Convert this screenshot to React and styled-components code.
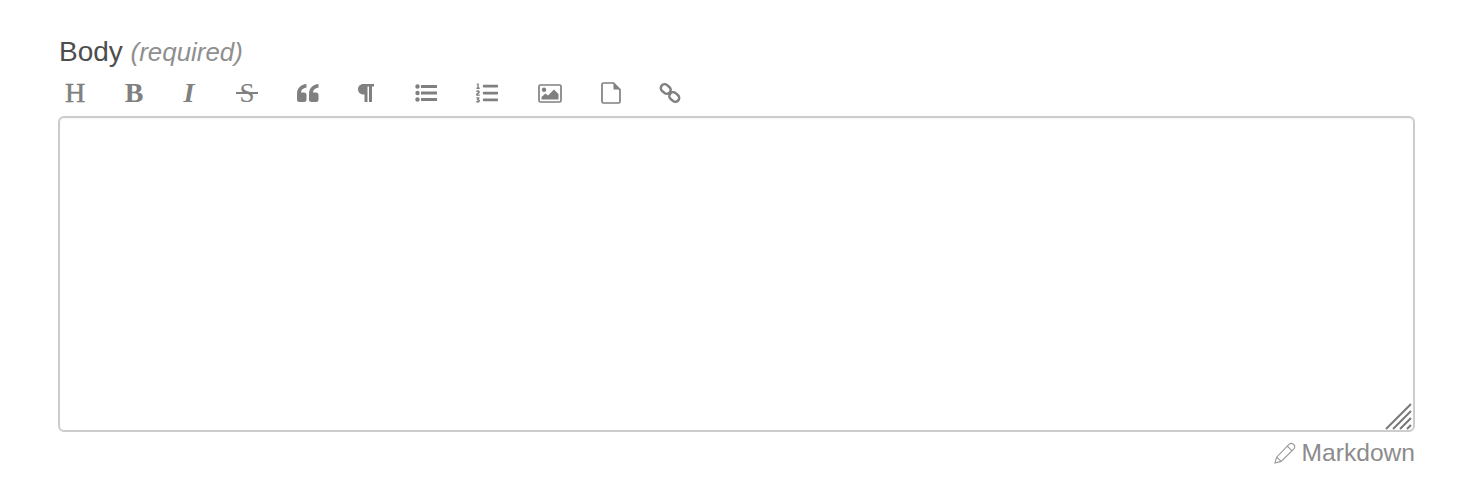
import React from "react";
import styled, { createGlobalStyle } from "styled-components";
import { FaListOl } from "react-icons/fa";

const GlobalStyle = createGlobalStyle`
  html, body {
    margin: 0;
    padding: 0;
    background: #fff;
    font-family: "Liberation Sans", Arial, sans-serif;
  }
`;

const Page = styled.div`
  padding: 36px 63px 0 58px;
`;

const Label = styled.label`
  display: block;
  height: 32px;
  line-height: 32px;
  font-size: 28px;
  padding-left: 1px;
  color: #4d4d4d;
`;

const Hint = styled.em`
  font-size: 25.9px;
  color: #8f8f8f;
`;

const Toolbar = styled.div`
  display: flex;
  align-items: center;
  height: 40px;
  margin-top: 5px;
  color: #808080;
`;

const Tool = styled.span`
  flex: none;
  position: relative;
  width: 34px;
  height: 40px;
  margin-left: ${(p) => p.$gap || 0}px;
  display: flex;
  justify-content: center;
  align-items: center;
  svg {
    display: block;
    fill: currentColor;
  }
`;

const Letter = styled(Tool)`
  font-family: "Liberation Serif", "Times New Roman", serif;
  font-size: 28px;
  line-height: 40px;
  font-weight: ${(p) => (p.$light ? "normal" : "bold")};
  font-style: ${(p) => (p.$italic ? "italic" : "normal")};
  -webkit-text-stroke: ${(p) => (p.$light ? "0.5px #808080" : "0")};
`;

const Strike = styled(Letter)`
  font-size: 27px;
  font-weight: normal;
  -webkit-text-stroke: 0;
  &::after {
    content: "";
    position: absolute;
    left: 6px;
    right: 6px;
    top: 19px;
    height: 2px;
    background: #808080;
  }
`;

const EditorWrap = styled.div`
  position: relative;
  margin-top: 3px;
  height: 316px;
`;

const Editor = styled.textarea`
  display: block;
  box-sizing: border-box;
  width: 100%;
  height: 100%;
  border: 2px solid #cccccc;
  border-radius: 6px;
  background: #fff;
  resize: none;
  outline: none;
  box-shadow: inset 0 1px 2px rgba(0, 0, 0, 0.04);
`;

const Grip = styled.svg`
  position: absolute;
  right: 2px;
  bottom: 2px;
  width: 28px;
  height: 28px;
`;

const Footer = styled.div`
  display: flex;
  justify-content: flex-end;
  align-items: center;
  gap: 6px;
  margin-top: 7px;
  height: 28px;
  font-size: 24.6px;
  color: #8c8c8c;
`;

const QuoteIcon = () => (
  <svg width="22" height="18" viewBox="0 0 22 18">
    <path d="M9.5 0C4 .5 0 4 0 10v5.5Q0 18 2.5 18H7q2.5 0 2.5-2.5V11Q9.5 8.5 7 8.5H4C4 6 6 4 9.5 3.5Z" />
    <path d="M21.5 0C16 .5 12 4 12 10v5.5q0 2.5 2.5 2.5H19q2.5 0 2.5-2.5V11q0-2.5-2.5-2.5h-3c0-2.5 2-4.5 5.5-5Z" />
  </svg>
);

const ParagraphIcon = () => (
  <svg width="16" height="18" viewBox="0 0 16 18">
    <path d="M5.5 0H16v2.5h-2V18h-3V2.5H9.5V18h-3v-7.5h-1C2 10.5 0 8 0 5.25S2 0 5.5 0Z" />
  </svg>
);

const ListIcon = () => (
  <svg width="22" height="18" viewBox="0 0 22 18">
    <circle cx="2.5" cy="2.5" r="2.2" />
    <circle cx="2.5" cy="9" r="2.2" />
    <circle cx="2.5" cy="15.5" r="2.2" />
    <rect x="6" y="1" width="16" height="3" />
    <rect x="6" y="7.5" width="16" height="3" />
    <rect x="6" y="14" width="16" height="3" />
  </svg>
);

const OrderedIcon = () => <FaListOl size={22} />;

const ImageIcon = () => (
  <svg width="24" height="19" viewBox="0 0 24 19">
    <rect x="1" y="1" width="22" height="17" rx="1.5" fill="none" stroke="currentColor" strokeWidth="1.7" />
    <circle cx="6" cy="5.8" r="2.2" />
    <path d="M3.5 15.5h17V10L16 5.5l-6 6-2.5-2-4 3.5Z" />
  </svg>
);

const FileIcon = () => (
  <svg width="20" height="22" viewBox="0 0 20 22">
    <path d="M2.5 1H12.5L19 7.5V19.5Q19 21 17.5 21H2.5Q1 21 1 19.5V2.5Q1 1 2.5 1Z" fill="none" stroke="currentColor" strokeWidth="1.7" />
    <path d="M12.5 1L19 7.5H12.5Z" />
  </svg>
);

const LinkIcon = () => (
  <svg width="22" height="20" viewBox="0 0 22 20">
    <g fill="none" stroke="currentColor" strokeWidth="2.5">
      <rect x="1.5" y="2.2" width="10.5" height="7.6" rx="3.8" transform="rotate(40 6.75 6)" />
      <rect x="10" y="10.2" width="10.5" height="7.6" rx="3.8" transform="rotate(40 15.25 14)" />
    </g>
  </svg>
);

const tools = [
  { key: "h", Comp: Letter, text: "H", gap: 0, light: true },
  { key: "b", Comp: Letter, text: "B", gap: 25 },
  { key: "i", Comp: Letter, text: "I", gap: 21, italic: true },
  { key: "s", Comp: Strike, text: "S", gap: 24 },
  { key: "q", Comp: Tool, Icon: QuoteIcon, gap: 27 },
  { key: "p", Comp: Tool, Icon: ParagraphIcon, gap: 24 },
  { key: "ul", Comp: Tool, Icon: ListIcon, gap: 26 },
  { key: "ol", Comp: Tool, Icon: OrderedIcon, gap: 27 },
  { key: "img", Comp: Tool, Icon: ImageIcon, gap: 29 },
  { key: "file", Comp: Tool, Icon: FileIcon, gap: 27 },
  { key: "link", Comp: Tool, Icon: LinkIcon, gap: 25 },
];

const App = () => {
  return (
    <Page>
      <GlobalStyle />
      <Label>
        Body <Hint>(required)</Hint>
      </Label>
      <Toolbar>
        {tools.map(({ key, Comp, text, gap, light, italic, Icon }) => (
          <Comp key={key} $gap={gap} $light={light} $italic={italic}>
            {Icon ? <Icon /> : text}
          </Comp>
        ))}
      </Toolbar>
      <EditorWrap>
        <Editor />
        <Grip viewBox="0 0 28 28">
          <g stroke="#777" strokeWidth="2" fill="none">
            <line x1="1" y1="27" x2="26" y2="2" />
            <line x1="8" y1="27" x2="26" y2="9" />
            <line x1="15" y1="27" x2="26" y2="16" />
            <line x1="22" y1="27" x2="26" y2="23" />
          </g>
        </Grip>
      </EditorWrap>
      <Footer>
        <svg width="22" height="22" viewBox="0 0 21 21" fill="none" stroke="#999" strokeWidth="1.1">
          <path d="M1 20L2.5 14.5L14.5 2Q16.5 0.5 18.5 2L19.2 2.8Q20.5 4.5 19 6.5L6.8 18.5Z" />
          <path d="M12.7 4L17.2 8.5" />
          <path d="M2.5 14.5L6.8 18.5" />
        </svg>
        Markdown
      </Footer>
    </Page>
  );
};

export default App;
